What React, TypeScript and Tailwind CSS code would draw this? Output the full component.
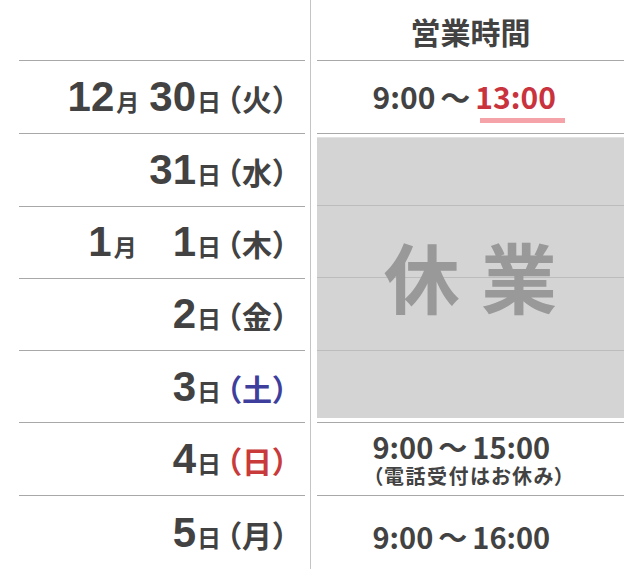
import React from "react";

const NUM = "font-['Liberation_Sans',Arial,sans-serif] font-bold";
const CJK = "font-['Noto_Sans_CJK_JP',sans-serif] font-bold";

type LeftProps = {
  month?: string;
  day: string;
  dow: string;
  dowColor?: string;
  gap?: string;
  h: string;
  last?: boolean;
};

function LeftRow({ month, day, dow, dowColor, gap, h, last }: LeftProps) {
  return (
    <div
      className={`${h} flex items-center justify-end pr-[16px] text-[#424242] ${
        last ? "" : "border-b border-[#a8a8a8]"
      }`}
    >
      <div className="flex items-baseline leading-none whitespace-nowrap">
        {month && (
          <>
            <span className={`${NUM} text-[42px]`}>{month}</span>
            <span className={`${CJK} text-[23px] ml-[2px]`}>月</span>
          </>
        )}
        <span className={`${NUM} text-[42px] ${gap ?? ""}`}>{day}</span>
        <span className={`${CJK} text-[24px] ml-[1px]`}>日</span>
        <span
          className={`${CJK} text-[30px] ml-[5px] tracking-[1px] [font-feature-settings:'palt'] ${
            dowColor ?? ""
          }`}
        >
          （{dow}）
        </span>
      </div>
    </div>
  );
}

function Wave() {
  return <span className="mx-[5px]">〜</span>;
}

export default function App() {
  return (
    <div className="w-[640px] h-[569px] bg-white flex overflow-hidden">
      {/* left column */}
      <div className="w-[310px] flex flex-col pl-[19px] pr-[5px]">
        <div className="h-[61px] border-b border-[#a8a8a8]" />
        <LeftRow month="12" day="30" dow="火" gap="ml-[10px]" h="h-[73px]" />
        <LeftRow day="31" dow="水" h="h-[73px]" />
        <LeftRow month="1" day="1" dow="木" gap="ml-[36px]" h="h-[72px]" />
        <LeftRow day="2" dow="金" h="h-[73px]" />
        <LeftRow day="3" dow="土" dowColor="text-[#3e3e9c]" h="h-[72px]" />
        <LeftRow day="4" dow="日" dowColor="text-[#c93a3a]" h="h-[73px]" />
        <LeftRow day="5" dow="月" h="h-[73px]" last />
      </div>

      {/* divider */}
      <div className="w-px bg-[#c4c4c4]" />

      {/* right column */}
      <div className={`flex-1 flex flex-col pl-[6px] pr-[16px] ${CJK} text-[#424242]`}>
        <div className="h-[61px] border-b border-[#a8a8a8] flex items-center justify-center">
          <span className="text-[30px] leading-none pt-[2px]">営業時間</span>
        </div>

        <div className="h-[73px] border-b border-[#a8a8a8] flex items-center justify-center">
          <div className="w-[196px] text-[30px] leading-none pb-[2px] whitespace-nowrap">
            9:00
            <Wave />
            <span className="relative text-[#c9333d]">
              13:00
              <span className="absolute left-[5px] -right-[9px] -bottom-[5px] h-[5px] bg-[#f5a3a9]" />
            </span>
          </div>
        </div>

        {/* closed block */}
        <div className="h-[290px] border-b border-[#a8a8a8] pt-[3px] pb-[4px]">
          <div className="relative h-full bg-[#d4d4d4] flex flex-col border-t border-[#e2e2e2]">
            <div className="h-[68px] border-b border-[#bcbcbc]" />
            <div className="h-[72px] border-b border-[#bcbcbc]" />
            <div className="h-[73px] border-b border-[#bcbcbc]" />
            <div className="flex-1" />
            <div className="absolute inset-0 flex items-center justify-center pb-[6px]">
              <span className="text-[76px] leading-none text-[#999999] tracking-[0.28em] pl-[0.28em]">
                休業
              </span>
            </div>
          </div>
        </div>

        <div className="h-[73px] border-b border-[#a8a8a8] flex items-center justify-center">
          <div className="w-[196px] whitespace-nowrap">
            <div className="text-[29px] leading-[30px]">
              9:00
              <Wave />
              15:00
            </div>
            <div className="text-[20px] leading-[22px] mt-[4px] tracking-[1.5px] [font-feature-settings:'palt']">
              （電話受付はお休み）
            </div>
          </div>
        </div>

        <div className="h-[73px] flex items-center justify-center">
          <div className="w-[196px] text-[29px] leading-none pt-[8px] whitespace-nowrap">
            9:00
            <Wave />
            16:00
          </div>
        </div>
      </div>
    </div>
  );
}
